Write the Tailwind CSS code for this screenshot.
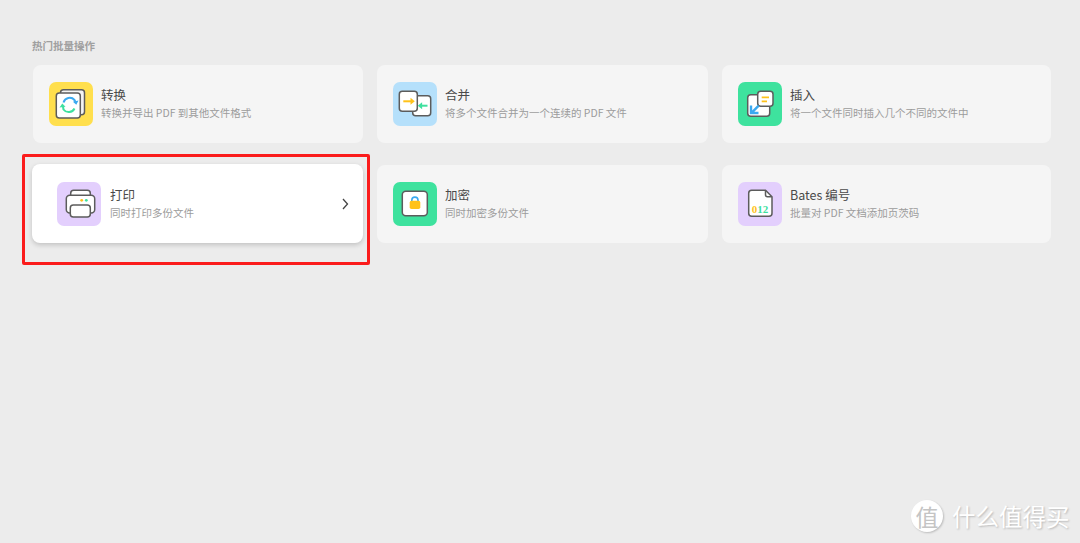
<!DOCTYPE html>
<html lang="zh-CN">
<head>
    <meta charset="UTF-8">
    <title>热门批量操作</title>
    <script src="https://cdn.jsdelivr.net/npm/@tailwindcss/browser@4"></script>
</head>
<body class="relative h-[543px] w-[1080px] overflow-hidden bg-[#ececec] font-['Noto_Sans_CJK_SC',sans-serif]">

    <main class="pl-[33px] pt-[39px]">
        <h2 class="-ml-px h-[14px] text-[10.5px] leading-[14px] font-bold text-[#a0a0a0]">热门批量操作</h2>

        <div class="mt-[12px] grid grid-cols-[330px_331px_329px] gap-x-[14px] gap-y-[22px]">

            <!-- 转换 -->
            <div class="flex h-[78px] items-center gap-[8px] rounded-lg bg-[#f5f5f5] pl-[16px]">
                <svg class="shrink-0" width="44" height="44" viewBox="0 0 44 44" fill="none">
                    <rect width="44" height="44" rx="7" fill="#ffdf4d"/>
                    <rect x="11.5" y="7.7" width="24" height="25" rx="3" fill="#f4f4f4" stroke="#5c5c5c" stroke-width="1.5"/>
                    <rect x="7.3" y="11" width="24" height="25" rx="3" fill="#fff" stroke="#5c5c5c" stroke-width="1.5"/>
                    <path d="M14.500 20.500a6.500 6.500 0 0 1 11 -2.500l1 2" stroke="#3aa9f0" stroke-width="2"/>
                    <path d="M29.500 18.500l-2.200 4.200-3.400-2.900z" fill="#3aa9f0"/>
                    <path d="M25.500 26.500a6.500 6.500 0 0 1 -11 1l-.5 -3" stroke="#3ee09f" stroke-width="2"/>
                    <path d="M10.500 25.500l2.800 -4 3.200 3.300z" fill="#3ee09f"/>
                </svg>
                <div>
                    <div class="mb-[2px] text-[12.5px] leading-[16px] text-[#4a4a4a]">转换</div>
                    <div class="text-[10.5px] leading-[16px] text-[#9c9c9c]">转换并导出 PDF 到其他文件格式</div>
                </div>
            </div>

            <!-- 合并 -->
            <div class="flex h-[78px] items-center gap-[8px] rounded-lg bg-[#f5f5f5] pl-[16px]">
                <svg class="shrink-0" width="44" height="44" viewBox="0 0 44 44" fill="none">
                    <rect width="44" height="44" rx="7" fill="#b5e0fb"/>
                    <rect x="19.700" y="13.700" width="18" height="20" rx="3" fill="#fff" stroke="#5c5c5c" stroke-width="1.500"/>
                    <rect x="6.300" y="9.300" width="18" height="20" rx="3" fill="#fff" stroke="#5c5c5c" stroke-width="1.500"/>
                    <path d="M10.300 19.300h8" stroke="#ffc21a" stroke-width="2"/>
                    <path d="M21.800 19.300l-4.300-3.500v7z" fill="#ffc21a"/>
                    <path d="M28 23.700h6.500" stroke="#3ee09f" stroke-width="2"/>
                    <path d="M24.800 23.700l4.300-3.500v7z" fill="#3ee09f"/>
                </svg>
                <div>
                    <div class="mb-[2px] text-[12.5px] leading-[16px] text-[#4a4a4a]">合并</div>
                    <div class="text-[10.5px] leading-[16px] text-[#9c9c9c]">将多个文件合并为一个连续的 PDF 文件</div>
                </div>
            </div>

            <!-- 插入 -->
            <div class="flex h-[78px] items-center gap-[8px] rounded-lg bg-[#f5f5f5] pl-[16px]">
                <svg class="shrink-0" width="44" height="44" viewBox="0 0 44 44" fill="none">
                    <rect width="44" height="44" rx="7" fill="#3ee29e"/>
                    <rect x="9.700" y="12.700" width="22" height="21.600" rx="3" fill="#fff" stroke="#5c5c5c" stroke-width="1.500"/>
                    <rect x="19.700" y="9.300" width="15.300" height="15" rx="3" fill="#fff" stroke="#5c5c5c" stroke-width="1.500"/>
                    <path d="M23.700 15.300h7.300M23.700 19.300h5.300" stroke="#ffc21a" stroke-width="1.800"/>
                    <path d="M20.700 23.700L14 30.300M13 23.500v7.500h7.500" stroke="#3aa9f0" stroke-width="2.400"/>
                </svg>
                <div>
                    <div class="mb-[2px] text-[12.5px] leading-[16px] text-[#4a4a4a]">插入</div>
                    <div class="text-[10.5px] leading-[16px] text-[#9c9c9c]">将一个文件同时插入几个不同的文件中</div>
                </div>
            </div>

            <!-- 打印 (hover) -->
            <div class="relative -mt-px -ml-px flex h-[79px] items-center gap-[9px] rounded-lg bg-white pl-[25px] pr-[14px] shadow-[0_2px_5px_rgba(0,0,0,0.18)]">
                <svg class="shrink-0" width="44" height="44" viewBox="0 0 44 44" fill="none">
                    <rect width="44" height="44" rx="7" fill="#e3cffd"/>
                    <rect x="13.700" y="8.300" width="19.600" height="10" rx="3" fill="#fff" stroke="#5c5c5c" stroke-width="1.500"/>
                    <rect x="9.300" y="13.300" width="28.400" height="17.700" rx="3.500" fill="#fff" stroke="#5c5c5c" stroke-width="1.500"/>
                    <rect x="13.300" y="23" width="20" height="12" rx="3" fill="#fff" stroke="#5c5c5c" stroke-width="1.500"/>
                    <circle cx="24.700" cy="18.300" r="1.400" fill="#ffc21a"/>
                    <circle cx="29.300" cy="18.300" r="1.400" fill="#3ee09f"/>
                </svg>
                <div class="flex-1">
                    <div class="mb-[2px] text-[12.5px] leading-[16px] text-[#4a4a4a]">打印</div>
                    <div class="text-[10.5px] leading-[16px] text-[#9c9c9c]">同时打印多份文件</div>
                </div>
                <svg width="8" height="14" viewBox="0 0 8 14" fill="none">
                    <path d="M2 2L6.500 7 2 12" stroke="#444" stroke-width="1.300"/>
                </svg>
            </div>

            <!-- 加密 -->
            <div class="flex h-[78px] items-center gap-[8px] rounded-lg bg-[#f5f5f5] pl-[16px]">
                <svg class="shrink-0" width="44" height="44" viewBox="0 0 44 44" fill="none">
                    <rect width="44" height="44" rx="7" fill="#3ee29e"/>
                    <rect x="9.300" y="9.300" width="25" height="24.400" rx="3.500" fill="#fff" stroke="#5c5c5c" stroke-width="1.500"/>
                    <path d="M18.800 20v-1.800a3.100 3.100 0 0 1 6.200 0V20" stroke="#3aa9f0" stroke-width="1.600"/>
                    <rect x="16.700" y="18.700" width="10.600" height="8.300" rx="1.800" fill="#ffc21a"/>
                </svg>
                <div>
                    <div class="mb-[2px] text-[12.5px] leading-[16px] text-[#4a4a4a]">加密</div>
                    <div class="text-[10.5px] leading-[16px] text-[#9c9c9c]">同时加密多份文件</div>
                </div>
            </div>

            <!-- Bates 编号 -->
            <div class="flex h-[78px] items-center gap-[8px] rounded-lg bg-[#f5f5f5] pl-[16px]">
                <svg class="shrink-0" width="44" height="44" viewBox="0 0 44 44" fill="none">
                    <rect width="44" height="44" rx="7" fill="#e3cffd"/>
                    <path d="M13.700 8.300H27.500L34 14.800V31.300a3 3 0 0 1 -3 3H13.700a3 3 0 0 1 -3 -3V11.300a3 3 0 0 1 3 -3z" fill="#fff" stroke="#5c5c5c" stroke-width="1.500"/>
                    <path d="M27.500 8.300v4.500a2 2 0 0 0 2 2H34" stroke="#5c5c5c" stroke-width="1.500"/>
                    <text x="13.800" y="31" class="font-['Liberation_Serif',serif] text-[11px] font-bold"><tspan fill="#ffc21a">0</tspan><tspan fill="#3ee09f">12</tspan></text>
                </svg>
                <div>
                    <div class="mb-[2px] text-[12.5px] leading-[16px] text-[#4a4a4a]">Bates 编号</div>
                    <div class="text-[10.5px] leading-[16px] text-[#9c9c9c]">批量对 PDF 文档添加页茨码</div>
                </div>
            </div>
        </div>
    </main>

    <!-- annotation box over the hovered card -->
    <div class="pointer-events-none absolute left-[22px] top-[154px] h-[111px] w-[348px] rounded-[2px] border-[3px] border-[#fb1c1c]"></div>

    <!-- watermark -->
    <div class="absolute left-[911px] top-[500px] flex items-center gap-[9px] text-white [text-shadow:1px_1px_2px_rgba(0,0,0,0.22)]">
        <div class="flex h-[32px] w-[32px] items-center justify-center rounded-full bg-white text-[23px] leading-none text-[#c4c4c4] shadow-[1px_1px_2px_rgba(0,0,0,0.2)] [text-shadow:none]">值</div>
        <div class="text-[23.500px] leading-[32px] whitespace-nowrap">什么值得买</div>
    </div>

</body>
</html>
